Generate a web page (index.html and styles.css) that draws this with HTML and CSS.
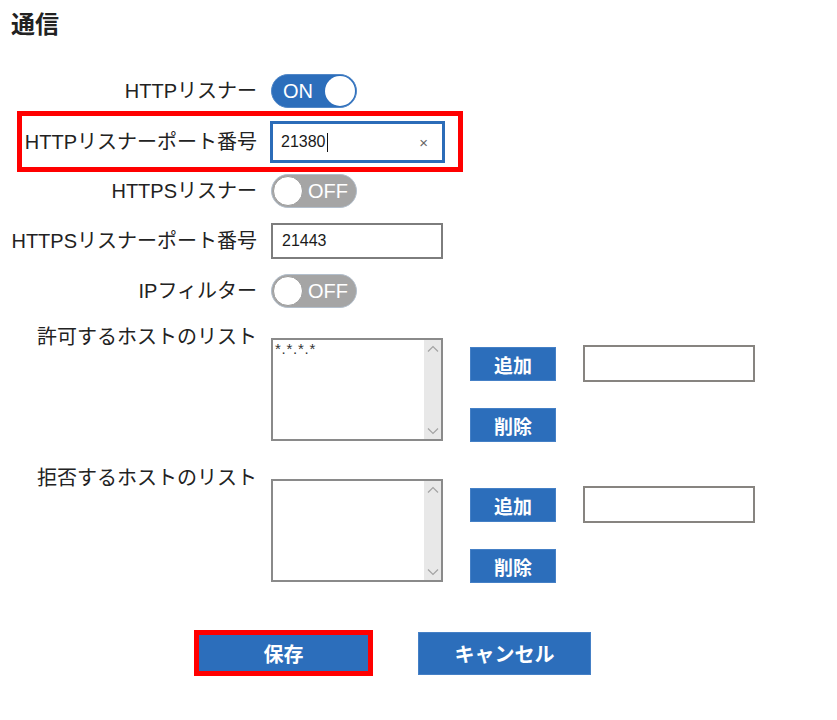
FILE: index.html
```html
<!DOCTYPE html>
<html lang="ja">
<head>
<meta charset="utf-8">
<title>通信</title>
<link rel="stylesheet" href="styles.css">
</head>
<body>
<h1 class="title">通信</h1>
<div class="settings">
  <div class="row row-toggle">
    <span class="label">HTTPリスナー</span>
    <div class="control">
      <div class="toggle toggle-on"><span class="toggle-text">ON</span><span class="knob"></span></div>
    </div>
  </div>
  <div class="row row-focus">
    <span class="label">HTTPリスナーポート番号</span>
    <div class="control">
      <div class="field field-focus"><span class="field-value">21380</span><span class="caret"></span><span class="clear">×</span></div>
    </div>
  </div>
  <div class="row row-toggle row-after-focus">
    <span class="label">HTTPSリスナー</span>
    <div class="control">
      <div class="toggle toggle-off"><span class="knob"></span><span class="toggle-text">OFF</span></div>
    </div>
  </div>
  <div class="row row-input">
    <span class="label">HTTPSリスナーポート番号</span>
    <div class="control">
      <div class="field field-plain"><span class="field-value">21443</span></div>
    </div>
  </div>
  <div class="row row-toggle row-spaced">
    <span class="label">IPフィルター</span>
    <div class="control">
      <div class="toggle toggle-off"><span class="knob"></span><span class="toggle-text">OFF</span></div>
    </div>
  </div>
  <div class="row row-list row-list-first">
    <span class="label">許可するホストのリスト</span>
    <div class="control">
      <div class="listbox">
        <div class="listbox-content">*.*.*.*</div>
        <div class="scrollbar">
          <svg class="chev" width="12" height="8" viewBox="0 0 12 8"><path d="M1 6.5 L6 1.5 L11 6.5" fill="none" stroke="#a3a3a3" stroke-width="1.2"/></svg>
          <svg class="chev" width="12" height="8" viewBox="0 0 12 8"><path d="M1 1.5 L6 6.5 L11 1.5" fill="none" stroke="#a3a3a3" stroke-width="1.2"/></svg>
        </div>
      </div>
      <div class="actions">
        <button class="btn btn-small" type="button">追加</button>
        <button class="btn btn-small" type="button">削除</button>
      </div>
      <div class="side-input"></div>
    </div>
  </div>
  <div class="row row-list row-list-second">
    <span class="label">拒否するホストのリスト</span>
    <div class="control">
      <div class="listbox">
        <div class="listbox-content"></div>
        <div class="scrollbar">
          <svg class="chev" width="12" height="8" viewBox="0 0 12 8"><path d="M1 6.5 L6 1.5 L11 6.5" fill="none" stroke="#a3a3a3" stroke-width="1.2"/></svg>
          <svg class="chev" width="12" height="8" viewBox="0 0 12 8"><path d="M1 1.5 L6 6.5 L11 1.5" fill="none" stroke="#a3a3a3" stroke-width="1.2"/></svg>
        </div>
      </div>
      <div class="actions">
        <button class="btn btn-small" type="button">追加</button>
        <button class="btn btn-small" type="button">削除</button>
      </div>
      <div class="side-input"></div>
    </div>
  </div>
  <div class="footer">
    <button class="btn btn-large btn-save" type="button">保存</button>
    <button class="btn btn-large" type="button">キャンセル</button>
  </div>
</div>
</body>
</html>
```
FILE: styles.css
```css
body {
  margin: 0;
  background: #ffffff;
  color: #222222;
  font-family: "Liberation Sans", "Noto Sans CJK JP", sans-serif;
}

.title {
  margin: 0;
  padding: 11px 0 0 11px;
  font-size: 24px;
  line-height: 28px;
  font-weight: bold;
}

.settings {
  margin-top: 35px;
  display: flex;
  flex-direction: column;
}

.row {
  display: flex;
  align-items: center;
}

.label {
  flex: none;
  width: 257px;
  text-align: right;
  font-size: 20px;
  line-height: 24px;
}

.control {
  margin-left: 14px;
  display: flex;
  align-items: flex-start;
}

.row-toggle { height: 34px; }
.row-after-focus { margin-top: 3px; }
.row-spaced { margin-top: 15px; }

.row-focus {
  position: relative;
  height: 60px;
  margin-top: 3px;
  padding-top: 2px;
  box-sizing: border-box;
}
.row-focus::before {
  content: "";
  position: absolute;
  left: 17px;
  top: 0;
  width: 446px;
  height: 61px;
  border: 5px solid #ff0000;
  box-sizing: border-box;
}

.row-input {
  height: 36px;
  margin-top: 15px;
}

/* toggles */
.toggle {
  width: 86px;
  height: 34px;
  border-radius: 17px;
  box-sizing: border-box;
  display: flex;
  align-items: center;
  color: #ffffff;
  font-size: 20px;
}
.toggle-on {
  background: #2c6ebb;
  border: 1px solid #5288c8;
  justify-content: space-between;
  padding: 0 1px 0 11px;
}
.toggle-off {
  background: #a5a5a5;
  border: 1px solid #b3bfcc;
  padding: 0 0 0 1px;
}
.toggle-off .toggle-text { margin-left: 5px; }
.knob {
  width: 30px;
  height: 30px;
  border-radius: 50%;
  background: #ffffff;
  box-sizing: border-box;
}
.toggle-off .knob { border: 1px solid #9a9a9a; }

/* text fields */
.field {
  display: flex;
  align-items: center;
  box-sizing: border-box;
  font-size: 16px;
  color: #1a1a1a;
  background: #ffffff;
}
.field-focus {
  width: 175px;
  height: 42px;
  margin-left: -1px;
  border: 3px solid #2b6cb8;
  padding: 0 14px 0 8px;
}
.caret {
  width: 1px;
  height: 19px;
  background: #111111;
  margin-left: 1px;
}
.clear {
  margin-left: auto;
  color: #666666;
  font-size: 15px;
}
.field-plain {
  width: 172px;
  height: 36px;
  border: 2px solid #7d7d7d;
  padding: 0 9px;
}

/* list rows */
.row-list { align-items: flex-start; }
.row-list-first { margin-top: 17px; }
.row-list-second { margin-top: 24px; }

.listbox {
  width: 172px;
  height: 103px;
  margin-top: 13px;
  border: 2px solid #8a8a8a;
  box-sizing: border-box;
  display: flex;
  background: #ffffff;
}
.listbox-content {
  flex: 1;
  padding: 0 0 0 2px;
  font-size: 15px;
  line-height: 17px;
  letter-spacing: 0.75px;
  color: #333333;
}
.scrollbar {
  width: 17px;
  background: #e8e8e8;
  display: flex;
  flex-direction: column;
  justify-content: space-between;
  align-items: center;
  padding: 5px 0 4px;
  box-sizing: border-box;
}
.chev { display: block; }

.actions {
  margin-left: 27px;
  margin-top: 22px;
  display: flex;
  flex-direction: column;
  gap: 27px;
}

.side-input {
  width: 172px;
  height: 37px;
  margin-left: 27px;
  margin-top: 20px;
  border: 2px solid #878480;
  box-sizing: border-box;
  background: #ffffff;
}

/* buttons */
.btn {
  background: #2c6ebb;
  color: #ffffff;
  font-family: "Liberation Sans", "Noto Sans CJK JP", sans-serif;
  font-weight: bold;
  font-size: 20px;
  border: 1px solid #4580c6;
  box-sizing: border-box;
  padding: 0;
  margin: 0;
  cursor: pointer;
}
.btn-small {
  width: 86px;
  height: 34px;
  font-size: 19px;
}
.btn-large {
  width: 173px;
  height: 43px;
}
.btn-save {
  width: 179px;
  height: 46px;
  border: 5px solid #ff0000;
}

.footer {
  margin-top: 47px;
  padding-left: 194px;
  display: flex;
  align-items: center;
  gap: 45px;
}
```
